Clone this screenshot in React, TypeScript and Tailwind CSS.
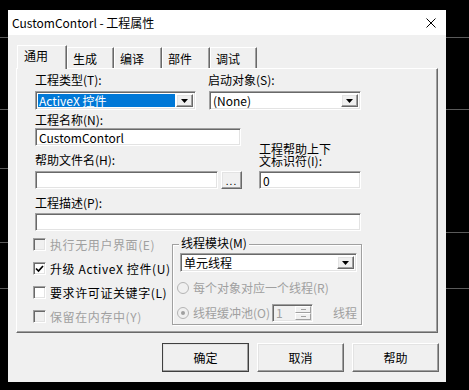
import React from 'react'

const font = "font-['Noto_Sans_CJK_SC',sans-serif]"
const sunken =
    'border border-t-[#a0a0a0] border-l-[#a0a0a0] border-b-white border-r-white shadow-[inset_1px_1px_0_#696969,inset_-1px_-1px_0_#e3e3e3]'
const raised =
    'border border-t-white border-l-white border-b-[#696969] border-r-[#696969] shadow-[inset_-1px_-1px_0_#a0a0a0,inset_1px_1px_0_#e3e3e3]'

function DropArrow() {
    return (
        <div className={`${raised} w-[17px] h-full flex items-center justify-center bg-[#f0f0f0] shrink-0`}>
            <svg width="7" height="4" viewBox="0 0 7 4">
                <polygon points="0,0 7,0 3.5,4" fill="#000" />
            </svg>
        </div>
    )
}

function Combo({ className, text, highlight = false }: { className: string; text: string; highlight?: boolean }) {
    return (
        <div className={`${sunken} ${className} bg-white flex items-stretch p-[2px] gap-[1px]`}>
            <div
                className={`flex-1 flex items-center px-[1px] leading-[13px] text-[12px] ${
                    highlight ? 'bg-[#0078d7] text-white' : 'text-black'
                }`}
            >
                {text}
            </div>
            <DropArrow />
        </div>
    )
}

function Field({ className, text = '' }: { className: string; text?: string }) {
    return (
        <div className={`${sunken} ${className} bg-white flex items-center px-[3px] text-[12px] leading-[13px] text-black`}>
            {text}
        </div>
    )
}

function CheckRow({ label, checked = false, disabled = false }: { label: string; checked?: boolean; disabled?: boolean }) {
    return (
        <div className="flex items-center h-[13px] gap-[4px]">
            <div
                className={`${sunken} w-[13px] h-[13px] flex items-center justify-center shrink-0 ${disabled ? 'bg-[#f0f0f0]' : 'bg-white'}`}
            >
                {checked && (
                    <svg width="9" height="9" viewBox="0 0 9 9">
                        <path d="M1 4.5 L3.5 7 L8 2" stroke="#000" strokeWidth="1.7" fill="none" />
                    </svg>
                )}
            </div>
            <span
                className={`text-[12px] tracking-[0.6px] leading-[14px] whitespace-nowrap ${disabled ? 'text-[#a0a0a0]' : 'text-black'}`}
            >
                {label}
            </span>
        </div>
    )
}

function Radio({ checked = false }: { checked?: boolean }) {
    return (
        <div className="w-[12px] h-[12px] rounded-full border border-[#b4b4b4] bg-[#f0f0f0] flex items-center justify-center shrink-0">
            {checked && <div className="w-[4px] h-[4px] rounded-full bg-[#a0a0a0]" />}
        </div>
    )
}

function Tab({ label, active = false, className }: { label: string; active?: boolean; className: string }) {
    if (active) {
        return (
            <div
                className={`${className} h-[24px] bg-[#f0f0f0] border-t border-l border-t-white border-l-white border-r border-r-[#696969] shadow-[inset_-1px_0_0_#a0a0a0] pl-[6px] pt-[3px] text-[12px] leading-[14px] text-black`}
            >
                {label}
            </div>
        )
    }
    return (
        <div
            className={`${className} h-[21px] mb-[1px] bg-[#f0f0f0] border-t border-l border-t-white border-l-white border-r border-r-[#696969] shadow-[inset_-1px_0_0_#a0a0a0] pl-[5px] pt-[4px] text-[12px] leading-[14px] text-black`}
        >
            {label}
        </div>
    )
}

function Button({ label, isDefault = false }: { label: string; isDefault?: boolean }) {
    return (
        <div
            className={`w-[87px] h-[29px] ${isDefault ? 'outline outline-1 outline-[#404040] -outline-offset-1' : ''} bg-[#f0f0f0]`}
        >
            <div className={`${raised} w-full h-full flex items-center justify-center text-[12px] text-black`}>{label}</div>
        </div>
    )
}

export default function App() {
    return (
        <div className={`w-[469px] h-[390px] bg-black relative overflow-hidden pt-[10px] pl-[8px] ${font}`}>
            {/* desktop lines behind the window */}
            <div className="absolute left-0 top-[37px] w-[8px] h-[1px] bg-[#5a5a5a]" />
            <div className="absolute left-0 top-[109px] w-[8px] h-[1px] bg-[#5a5a5a]" />
            <div className="absolute left-0 top-[168px] w-[8px] h-[1px] bg-[#5a5a5a]" />
            <div className="absolute left-0 top-[242px] w-[8px] h-[1px] bg-[#5a5a5a]" />
            <div className="absolute left-0 top-[288px] w-[8px] h-[1px] bg-[#5a5a5a]" />
            <div className="absolute right-0 top-[37px] w-[23px] h-[1px] bg-[#5a5a5a]" />
            <div className="absolute right-0 top-[109px] w-[23px] h-[1px] bg-[#5a5a5a]" />
            <div className="absolute right-0 top-[232px] w-[23px] h-[1px] bg-[#5a5a5a]" />
            <div className="absolute right-0 top-[288px] w-[23px] h-[1px] bg-[#5a5a5a]" />

            <div className="relative w-[438px] h-[372px] bg-[#f0f0f0] flex flex-col">
                {/* title bar */}
                <div className="h-[25px] bg-white flex items-center justify-between pl-[4px] pr-[10px] shrink-0">
                    <span className="text-[12px] text-black leading-[14px]">CustomContorl - 工程属性</span>
                    <svg width="10" height="10" viewBox="0 0 10 10">
                        <path d="M0.5 0.5 L9.5 9.5 M9.5 0.5 L0.5 9.5" stroke="#000" strokeWidth="1" />
                    </svg>
                </div>

                <div className="flex-1 pt-[10px] flex flex-col">
                    {/* tabs */}
                    <div className="h-[24px] flex items-end pl-[9px] relative z-10">
                        <Tab label="通用" active className="w-[50px]" />
                        <Tab label="生成" className="w-[47px]" />
                        <Tab label="编译" className="w-[48px]" />
                        <Tab label="部件" className="w-[48px]" />
                        <Tab label="调试" className="w-[47px]" />
                    </div>

                    {/* tab panel */}
                    <div className="ml-[8px] -mt-[1px] w-[422px] h-[265px] border border-t-white border-l-white border-r-[#696969] border-b-[#696969] shadow-[inset_-1px_-1px_0_#a0a0a0] text-[12px] text-black flex flex-col">
                        <div className="mt-[4px] h-[14px] flex leading-[14px]">
                            <span className="ml-[18px] w-[173px]">工程类型(T):</span>
                            <span>启动对象(S):</span>
                        </div>
                        <div className="mt-[4px] flex ml-[18px] gap-[13px]">
                            <Combo className="w-[161px] h-[19px]" text="ActiveX 控件" highlight />
                            <Combo className="w-[152px] h-[19px]" text="(None)" />
                        </div>

                        <div className="flex items-end ml-[18px]">
                            <div className="flex flex-col w-[207px]">
                                <span className="mt-[3px] h-[14px] leading-[14px]">工程名称(N):</span>
                                <Field className="mt-[1px] w-[206px] h-[18px]" text="CustomContorl" />
                                <span className="mt-[7px] h-[14px] leading-[14px]">帮助文件名(H):</span>
                                <div className="mt-[4px] flex gap-[3px]">
                                    <Field className="w-[183px] h-[18px]" />
                                    <div className={`${raised} w-[21px] h-[18px] flex items-end justify-center pb-[2px] text-[10px] leading-[10px] tracking-[1px]`}>
                                        ...
                                    </div>
                                </div>
                            </div>
                            <div className="ml-[17px] flex flex-col">
                                <span className="leading-[12px] h-[24px] w-[102px]">
                                    工程帮助上下
                                    <br />
                                    文标识符(I):
                                </span>
                                <Field className="mt-[4px] w-[102px] h-[18px]" text="0" />
                            </div>
                        </div>

                        <span className="mt-[7px] ml-[18px] h-[14px] leading-[14px]">工程描述(P):</span>
                        <Field className="mt-[3px] ml-[18px] w-[326px] h-[18px]" />

                        <div className="mt-[6px] flex">
                            <div className="ml-[16px] w-[139px] pt-[1px] flex flex-col gap-[11px]">
                                <CheckRow label="执行无用户界面(E)" disabled />
                                <CheckRow label="升级 ActiveX 控件(U)" checked />
                                <CheckRow label="要求许可证关键字(L)" />
                                <CheckRow label="保留在内存中(Y)" disabled />
                            </div>

                            <div className="relative w-[190px] pt-[7px]">
                                <div className="h-[81px] border border-[#a0a0a0] shadow-[inset_1px_1px_0_white,1px_1px_0_white] flex flex-col">
                                    <Combo className="mt-[8px] ml-[7px] w-[177px] h-[19px]" text="单元线程" />
                                    <div className="mt-[10px] ml-[4px] h-[12px] flex items-center gap-[4px] text-[#a0a0a0]">
                                        <Radio />
                                        <span className="leading-[12px] whitespace-nowrap">每个对象对应一个线程(R)</span>
                                    </div>
                                    <div className="mt-[10px] ml-[4px] h-[18px] flex items-center text-[#a0a0a0]">
                                        <Radio checked />
                                        <span className="ml-[4px] w-[79px] leading-[12px] whitespace-nowrap">线程缓冲池(O)</span>
                                        <div className={`${sunken} w-[41px] h-[18px] bg-[#f0f0f0] flex items-stretch p-[1px]`}>
                                            <span className="flex-1 pl-[2px] leading-[14px]">1</span>
                                            <div className="w-[16px] flex flex-col">
                                                <div className="flex-1 border border-t-white border-l-white border-b-[#a0a0a0] border-r-[#a0a0a0] flex items-center justify-center">
                                                    <div className="w-[5px] h-[1px] bg-[#a0a0a0]" />
                                                </div>
                                                <div className="flex-1 border border-t-white border-l-white border-b-[#a0a0a0] border-r-[#a0a0a0] flex items-center justify-center">
                                                    <div className="w-[5px] h-[1px] bg-[#a0a0a0]" />
                                                </div>
                                            </div>
                                        </div>
                                        <span className="ml-[20px] leading-[12px]">线程</span>
                                    </div>
                                </div>
                                <span className="absolute top-0 left-[7px] px-[2px] bg-[#f0f0f0] leading-[12px] h-[13px]">
                                    线程模块(M)
                                </span>
                            </div>
                        </div>
                    </div>

                    {/* dialog buttons */}
                    <div className="mt-[10px] flex justify-end gap-[8px] pr-[7px]">
                        <Button label="确定" isDefault />
                        <Button label="取消" />
                        <Button label="帮助" />
                    </div>
                </div>
            </div>
        </div>
    )
}
